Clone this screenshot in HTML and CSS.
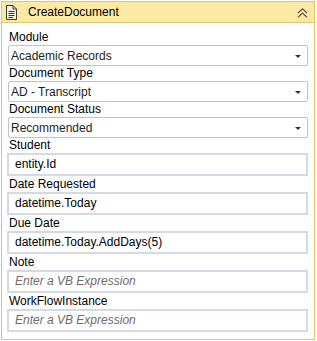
FILE: index.html
```html
<!DOCTYPE html>
<html>
<head>
<meta charset="utf-8">
<link rel="stylesheet" href="styles.css">
</head>
<body>
<div class="panel">
  <div class="header">
    <svg class="doc-icon" width="11" height="15" viewBox="0 0 11 15">
      <path d="M0.5 0.5 H7 L10.5 4 V14.5 H0.5 Z" fill="#f6f2e6" stroke="#3a3a3a" stroke-width="1"/>
      <path d="M7 0.5 V4 H10.5" fill="none" stroke="#3a3a3a" stroke-width="1"/>
      <path d="M2.5 6.5 H8.5 M2.5 8.5 H8.5 M2.5 10.5 H8.5 M2.5 12.5 H7" stroke="#3a3a3a" stroke-width="1"/>
    </svg>
    <span class="title">CreateDocument</span>
    <svg class="collapse" width="11" height="10" viewBox="0 0 11 10">
      <path d="M1 5 L5.5 0.8 L10 5" fill="none" stroke="#555" stroke-width="1.2"/>
      <path d="M1 9.2 L5.5 5 L10 9.2" fill="none" stroke="#555" stroke-width="1.2"/>
    </svg>
  </div>
  <div class="body">
    <div class="label">Module</div>
    <div class="combo"><span>Academic Records</span><i class="arrow"></i></div>
    <div class="label">Document Type</div>
    <div class="combo"><span>AD - Transcript</span><i class="arrow"></i></div>
    <div class="label">Document Status</div>
    <div class="combo"><span>Recommended</span><i class="arrow"></i></div>
    <div class="label">Student</div>
    <div class="text">entity.Id</div>
    <div class="label">Date Requested</div>
    <div class="text">datetime.Today</div>
    <div class="label">Due Date</div>
    <div class="text">datetime.Today.AddDays(5)</div>
    <div class="label">Note</div>
    <div class="text placeholder">Enter a VB Expression</div>
    <div class="label">WorkFlowInstance</div>
    <div class="text placeholder last">Enter a VB Expression</div>
  </div>
</div>
</body>
</html>
```
FILE: styles.css
```css
html, body {
  margin: 0;
  padding: 0;
  background: #ffffff;
}
body {
  font-family: "Liberation Sans", Arial, sans-serif;
  font-size: 12px;
  color: #000;
}
.panel {
  margin: 1px 0 0 1px;
  width: 312px;
  height: 337px;
  border: 1px solid #e5c468;
  background: #fff;
  box-sizing: content-box;
  display: flex;
  flex-direction: column;
}
.header {
  height: 20px;
  background: #fde9a4;
  border-bottom: 1px solid #e5c468;
  display: flex;
  align-items: center;
  padding: 0 6px 0 4px;
}
.doc-icon {
  display: block;
  margin-right: 11px;
  margin-top: 1px;
}
.title {
  flex: 1;
  line-height: 20px;
  color: #000;
}
.collapse {
  display: block;
  margin-top: 1px;
}
.body {
  padding: 7px 6px 7px 5px;
  display: flex;
  flex-direction: column;
}
.label {
  height: 15px;
  line-height: 15px;
  padding-left: 2px;
}
.combo {
  height: 21px;
  box-sizing: border-box;
  margin-left: 1px;
  border: 1px solid #c3c3c3;
  border-radius: 2px;
  display: flex;
  align-items: center;
  padding: 0 6px 0 2px;
  color: #1e1e1e;
}
.combo span {
  flex: 1;
}
.arrow {
  width: 0;
  height: 0;
  border-left: 3px solid transparent;
  border-right: 3px solid transparent;
  border-top: 3px solid #333;
  margin-top: 1px;
}
.text {
  height: 23px;
  box-sizing: border-box;
  border: 2px solid #d5d9e3;
  padding: 0 6px;
  line-height: 19px;
  margin-bottom: 1px;
  color: #000;
}
.text.last {
  margin-bottom: 0;
}
.placeholder {
  font-style: italic;
  color: #6d6d6d;
}
```
